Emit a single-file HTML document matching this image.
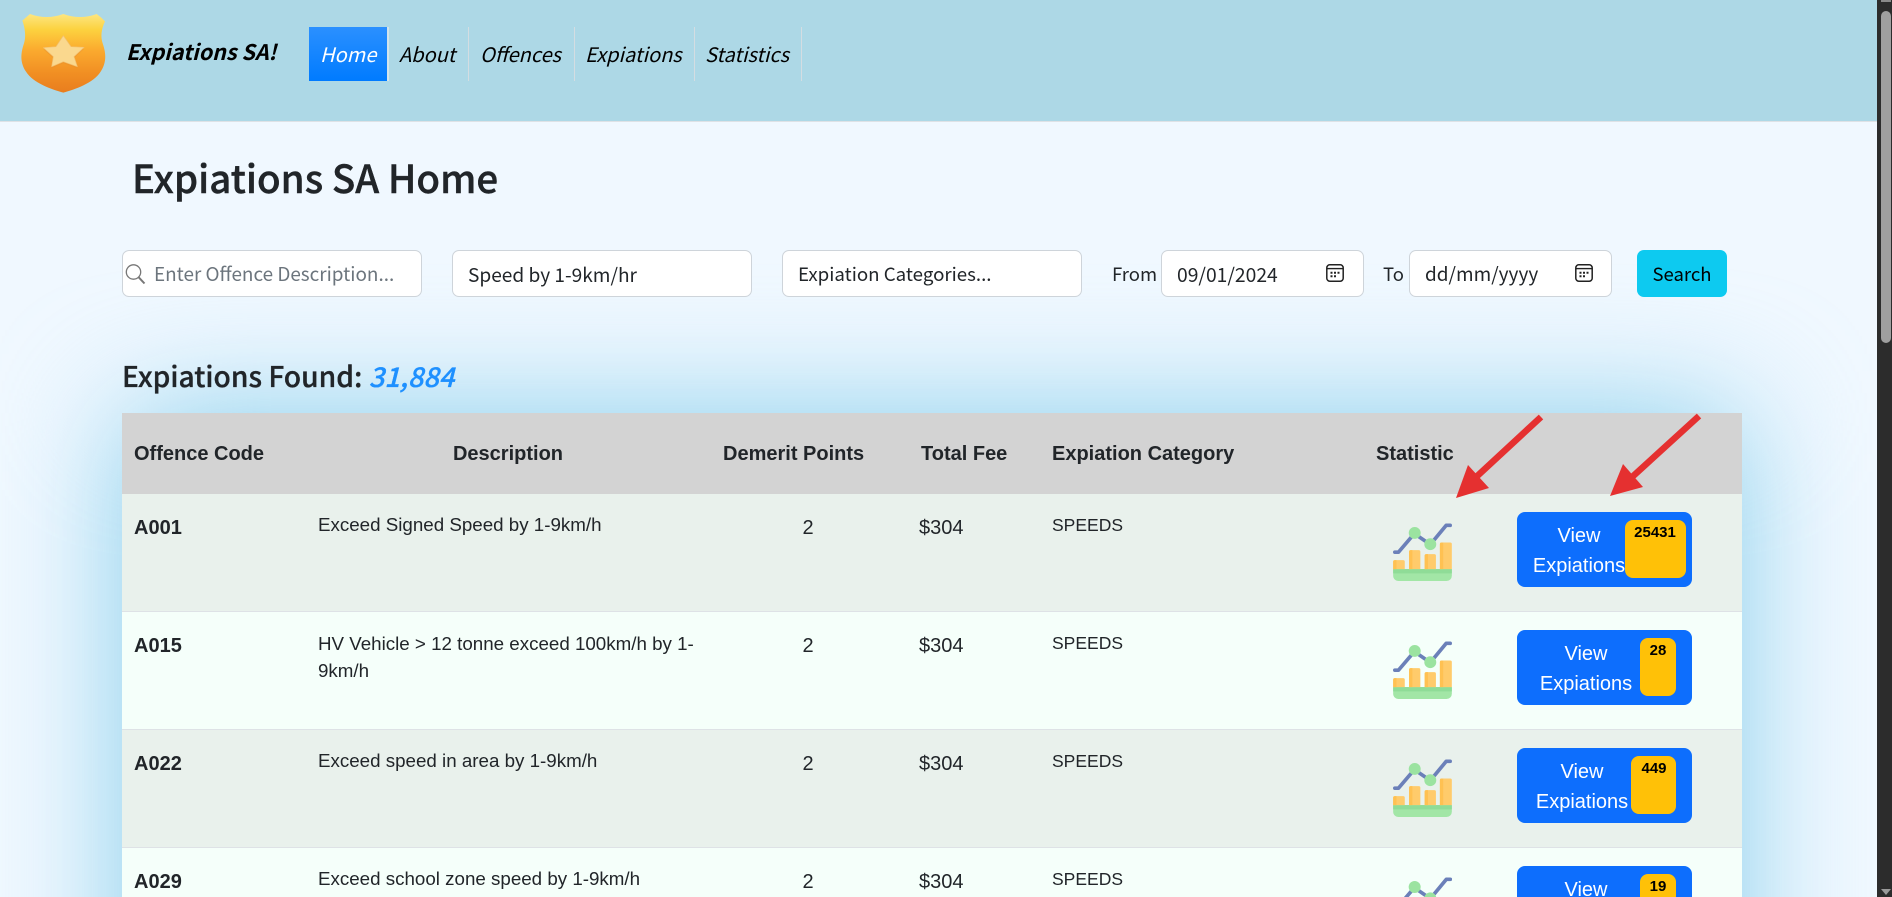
<!DOCTYPE html>
<html lang="en">
<head>
<meta charset="utf-8">
<title>Expiations SA Home</title>
<style>
html,body{margin:0;padding:0;width:1892px;height:897px;overflow:hidden;background:#f0f8ff}
#p{position:relative;width:1892px;height:897px;overflow:hidden;background:#f0f8ff;color:#212529}
.a{position:absolute}
.s,.l,.c{position:absolute;white-space:nowrap;height:36px;line-height:36px}
.s{font-family:"Noto Sans CJK JP","Liberation Sans",sans-serif}
.l{font-family:"Liberation Sans",sans-serif}
.c{transform:translateX(-50%)}
.nav{font-size:20px;font-style:italic;color:#000}
.inp{position:absolute;top:250px;height:45px;background:#fff;border:1px solid #ced4da;border-radius:7px}
.sep{position:absolute;top:27px;height:54px;width:1px;background:#d4dde2}
.row{position:absolute;left:122px;width:1620px;height:117px;border-bottom:1px solid #dee2e6}
.th{font-weight:bold;font-size:20px;top:436px}
.btn{position:absolute;left:1517px;width:175px;height:75px;background:#0d6efd;border-radius:8px}
.bd{position:absolute;height:58px;background:#ffc107;border-radius:8px}
.bt{position:absolute;font-family:"Liberation Sans",sans-serif;font-weight:bold;font-size:15px;color:#000;height:20px;line-height:20px;white-space:nowrap;transform:translateX(-50%)}
.w{color:#fff;font-size:20px}
.ic{position:absolute;left:1393px;width:59px;height:58px}
.code{font-size:20px;font-weight:bold}
.desc{font-size:18.75px}
.num{font-size:20px}
.cat{font-size:17.5px}
</style>
</head>
<body>
<div id="p">
  <svg width="0" height="0" style="position:absolute">
    <defs>
      <symbol id="chart" viewBox="69 53 177 175">
        <path d="M69 192H246V212a16 16 0 0 1-16 16H85a16 16 0 0 1-16-16Z" fill="#a2e6a6"/>
        <rect x="69" y="192" width="177" height="13" fill="#8fdc97"/>
        <path d="M69 192V170a5 5 0 0 1 5-5H99a5 5 0 0 1 5 5V192Z" fill="#ffcb6b"/>
        <path d="M117 192V140a5 5 0 0 1 5-5H146a5 5 0 0 1 5 5V192Z" fill="#ffcb6b"/>
        <path d="M164 192V152a5 5 0 0 1 5-5H193a5 5 0 0 1 5 5V192Z" fill="#ffcb6b"/>
        <path d="M210 192V117a5 5 0 0 1 5-5H241a5 5 0 0 1 5 5V192Z" fill="#ffcb6b"/>
        <path d="M69 192V170a5 5 0 0 1 5-5H79V192Z M117 192V140a5 5 0 0 1 5-5H127V192Z M164 192V152a5 5 0 0 1 5-5H174V192Z M210 192V117a5 5 0 0 1 5-5H220V192Z" fill="#ffc152"/>
        <path d="M74 141H85L133 85L181 118L229 60H241" fill="none" stroke="#6b80b9" stroke-width="11" stroke-linecap="round" stroke-linejoin="round"/>
        <circle cx="134" cy="83" r="18" fill="#9be3a0"/>
        <circle cx="181" cy="117" r="18" fill="#9be3a0"/>
      </symbol>
      <symbol id="cal" viewBox="0 0 18 18">
        <rect x="0.8" y="0.8" width="16.4" height="16.4" rx="3" fill="none" stroke="#222" stroke-width="1.5"/>
        <path d="M1 4.6H17" stroke="#222" stroke-width="1.4"/>
        <path d="M4.5 7.8h2v2h-2zM8 7.8h2v2H8zM11.5 7.8h2v2h-2zM4.5 11.3h2v2h-2zM8 11.3h2v2H8z" fill="#222"/>
      </symbol>
      <linearGradient id="sg" x1="0" y1="0" x2="0" y2="1">
        <stop offset="0" stop-color="#fde681"/>
        <stop offset=".2" stop-color="#fcd23f"/>
        <stop offset=".45" stop-color="#fbab2f"/>
        <stop offset=".75" stop-color="#f18f23"/>
        <stop offset="1" stop-color="#e97d1e"/>
      </linearGradient>
      <filter id="blur" filterUnits="userSpaceOnUse" x="-300" y="0" width="2500" height="1400" color-interpolation-filters="sRGB">
        <feGaussianBlur stdDeviation="62.5"/>
      </filter>
    </defs>
  </svg>

  <!-- table shadow -->
  <svg class="a" style="left:0;top:0" width="1892" height="897">
    <rect x="122" y="413" width="1620" height="900" fill="#87ceeb" filter="url(#blur)"/>
  </svg>

  <!-- header -->
  <div class="a" style="left:0;top:0;width:1877px;height:121px;background:#add8e6;border-bottom:1px solid #dee2e6"></div>
  <svg class="a" style="left:0;top:0" width="130" height="110" viewBox="0 0 390 330">
    <path d="M67 62Q78 52 90 42Q140 60 190 42Q240 60 290 42Q304 52 315 64Q298 100 308 130C320 165 318 190 302 215C280 250 225 268 190 278C155 268 100 250 78 215C62 190 60 165 72 130C82 100 67 62 67 62Z" fill="url(#sg)"/>
    <path d="M190 112L213 145L252 147L222 175L232 205L190 190L155 205L160 175L130 148L168 145Z" fill="#e88f2a" opacity=".45"/>
    <path d="M190 107L213 140L252 142L222 170L232 200L190 185L155 200L160 170L130 143L168 140Z" fill="#fad88e" stroke="#f2c070" stroke-width="2" stroke-linejoin="round"/>
  </svg>
  <div class="s" style="left:126px;top:34px;font-size:21.5px;font-weight:bold;font-style:italic;color:#000">Expiations SA!</div>
  <div class="a" style="left:309px;top:27px;width:78px;height:54px;background:linear-gradient(#2b90ff,#007bff);border-right:2px solid #d4e4ea"></div>
  <div class="sep" style="left:468px"></div>
  <div class="sep" style="left:574px"></div>
  <div class="sep" style="left:694px"></div>
  <div class="sep" style="left:801px"></div>
  <div class="s nav" style="left:320px;top:36px;color:#fff">Home</div>
  <div class="s nav" style="left:399px;top:36px">About</div>
  <div class="s nav" style="left:480px;top:36px">Offences</div>
  <div class="s nav" style="left:585px;top:36px">Expiations</div>
  <div class="s nav" style="left:705px;top:36px">Statistics</div>

  <!-- title -->
  <div class="s" style="left:132px;top:159px;font-size:38.5px;font-weight:500;-webkit-text-stroke:.4px #212529">Expiations SA Home</div>

  <!-- search -->
  <div class="inp" style="left:122px;width:298px"></div>
  <div class="inp" style="left:452px;width:298px"></div>
  <div class="inp" style="left:782px;width:298px"></div>
  <div class="inp" style="left:1161px;width:201px"></div>
  <div class="inp" style="left:1409px;width:201px"></div>
  <div class="a" style="left:1637px;top:250px;width:90px;height:47px;background:#0dcaf0;border-radius:7px"></div>
  <svg class="a" style="left:124px;top:263px" width="22" height="22" viewBox="0 0 22 22"><circle cx="9.5" cy="9" r="7.2" fill="none" stroke="#777" stroke-width="1.3"/><path d="M14.6 14.2L20.5 20.5" stroke="#777" stroke-width="2"/></svg>
  <div class="s" style="left:154px;top:256px;font-size:18.9px;color:#6c757d">Enter Offence Description...</div>
  <div class="s" style="left:468px;top:256px;font-size:19.1px">Speed by 1-9km/hr</div>
  <div class="s" style="left:798px;top:256px;font-size:18.7px">Expiation Categories...</div>
  <div class="s" style="left:1112px;top:256px;font-size:18.5px">From</div>
  <div class="s" style="left:1177px;top:256px;font-size:19.3px">09/01/2024</div>
  <svg class="a" style="left:1326px;top:264px" width="18" height="18"><use href="#cal"/></svg>
  <div class="s" style="left:1383px;top:256px;font-size:18.5px">To</div>
  <div class="s" style="left:1425px;top:256px;font-size:19px">dd/mm/yyyy</div>
  <svg class="a" style="left:1575px;top:264px" width="18" height="18"><use href="#cal"/></svg>
  <div class="s" style="left:1682px;top:256px;font-size:18.5px;color:#000;transform:translateX(-50%)">Search</div>

  <!-- found -->
  <div class="s" style="left:122px;top:357px;font-size:28.2px;font-weight:500;-webkit-text-stroke:.3px #212529">Expiations Found: <span style="color:#1e90ff;font-style:italic;font-size:27.2px;-webkit-text-stroke:.3px #1e90ff">31,884</span></div>

  <!-- table -->
  <div class="a" style="left:122px;top:413px;width:1620px;height:81px;background:#d3d3d3"></div>
  <div class="row" style="top:494px;background:#e9f1ec"></div>
  <div class="row" style="top:612px;background:#f5fffa"></div>
  <div class="row" style="top:730px;background:#e9f1ec"></div>
  <div class="row" style="top:848px;background:#f5fffa;height:49px;border:0"></div>

  <div class="l th" style="left:134px">Offence Code</div>
  <div class="l th c" style="left:508px">Description</div>
  <div class="l th" style="left:723px">Demerit Points</div>
  <div class="l th" style="left:921px">Total Fee</div>
  <div class="l th" style="left:1052px">Expiation Category</div>
  <div class="l th" style="left:1376px">Statistic</div>

  <!-- row1 -->
  <div class="l code" style="left:134px;top:510px">A001</div>
  <div class="l desc" style="left:318px;top:507px">Exceed Signed Speed by 1-9km/h</div>
  <div class="l num c" style="left:808px;top:510px">2</div>
  <div class="l num" style="left:919px;top:510px">$304</div>
  <div class="l cat" style="left:1052px;top:507px">SPEEDS</div>
  <svg class="ic" style="top:523px"><use href="#chart"/></svg>
  <div class="btn" style="top:512px"></div>
  <div class="l c w" style="left:1579px;top:518px">View</div>
  <div class="l c w" style="left:1579px;top:548px">Expiations</div>
  <div class="bd" style="left:1625px;top:520px;width:61px"></div>
  <div class="bt" style="left:1655px;top:523px">25431</div>

  <!-- row2 -->
  <div class="l code" style="left:134px;top:628px">A015</div>
  <div class="l desc" style="left:318px;top:626px">HV Vehicle &gt; 12 tonne exceed 100km/h by 1-</div>
  <div class="l desc" style="left:318px;top:653px">9km/h</div>
  <div class="l num c" style="left:808px;top:628px">2</div>
  <div class="l num" style="left:919px;top:628px">$304</div>
  <div class="l cat" style="left:1052px;top:625px">SPEEDS</div>
  <svg class="ic" style="top:641px"><use href="#chart"/></svg>
  <div class="btn" style="top:630px"></div>
  <div class="l c w" style="left:1586px;top:636px">View</div>
  <div class="l c w" style="left:1586px;top:666px">Expiations</div>
  <div class="bd" style="left:1640px;top:638px;width:36px"></div>
  <div class="bt" style="left:1658px;top:641px">28</div>

  <!-- row3 -->
  <div class="l code" style="left:134px;top:746px">A022</div>
  <div class="l desc" style="left:318px;top:743px">Exceed speed in area by 1-9km/h</div>
  <div class="l num c" style="left:808px;top:746px">2</div>
  <div class="l num" style="left:919px;top:746px">$304</div>
  <div class="l cat" style="left:1052px;top:743px">SPEEDS</div>
  <svg class="ic" style="top:759px"><use href="#chart"/></svg>
  <div class="btn" style="top:748px"></div>
  <div class="l c w" style="left:1582px;top:754px">View</div>
  <div class="l c w" style="left:1582px;top:784px">Expiations</div>
  <div class="bd" style="left:1631px;top:756px;width:45px"></div>
  <div class="bt" style="left:1654px;top:759px">449</div>

  <!-- row4 -->
  <div class="l code" style="left:134px;top:864px;height:33px;overflow:hidden">A029</div>
  <div class="l desc" style="left:318px;top:861px;overflow:hidden">Exceed school zone speed by 1-9km/h</div>
  <div class="l num c" style="left:808px;top:864px;height:33px;overflow:hidden">2</div>
  <div class="l num" style="left:919px;top:864px;height:33px;overflow:hidden">$304</div>
  <div class="l cat" style="left:1052px;top:861px;overflow:hidden">SPEEDS</div>
  <svg class="a" style="left:1393px;top:877px;overflow:hidden" width="59" height="20" viewBox="69 53 177 60"><path d="M74 141H85L133 85L181 118L229 60H241" fill="none" stroke="#6b80b9" stroke-width="11" stroke-linecap="round" stroke-linejoin="round"/><circle cx="134" cy="83" r="18" fill="#9be3a0"/><circle cx="181" cy="117" r="18" fill="#9be3a0"/></svg>
  <div class="btn" style="top:866px;height:31px;border-radius:8px 8px 0 0"></div>
  <div class="l c w" style="left:1586px;top:872px;height:25px;overflow:hidden">View</div>
  <div class="bd" style="left:1640px;top:874px;width:36px;height:23px;border-radius:8px 8px 0 0"></div>
  <div class="bt" style="left:1658px;top:877px">19</div>

  <!-- arrows -->
  <svg class="a" style="left:0;top:0" width="1892" height="897">
    <path d="M1541 417L1474 479" stroke="#e53030" stroke-width="6.5" fill="none"/>
    <polygon points="1456,498 1468,465 1489,488" fill="#e53030"/>
    <path d="M1699 416L1631 478" stroke="#e53030" stroke-width="6.5" fill="none"/>
    <polygon points="1610,496 1623,464 1643,487" fill="#e53030"/>
  </svg>

  <!-- scrollbar -->
  <div class="a" style="left:1877px;top:0;width:15px;height:897px;background:#2c2c2c"></div>
  <div class="a" style="left:1881px;top:11px;width:10px;height:332px;background:#9f9f9f;border-radius:5px"></div>
  <div class="a" style="left:1881px;top:0;width:10px;height:2px;background:#8a8a8a"></div>
  <svg class="a" style="left:1880px;top:888px" width="12" height="8"><polygon points="1,1 11,1 6,7" fill="#9a9a9a"/></svg>
</div>
</body>
</html>
